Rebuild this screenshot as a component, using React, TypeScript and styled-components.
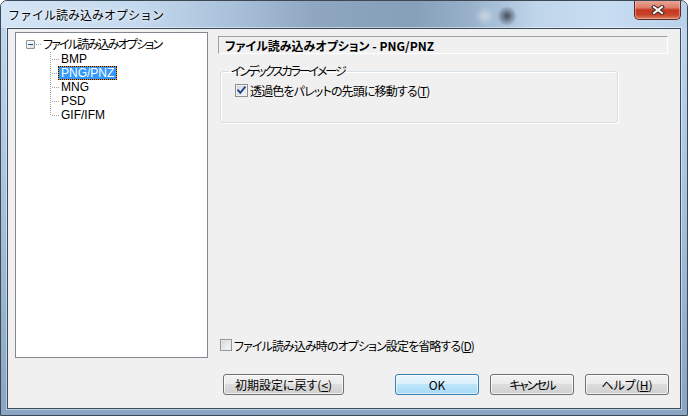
import React from "react";
import styled, { createGlobalStyle } from "styled-components";

const Global = createGlobalStyle`
  html, body { margin: 0; padding: 0; background: #fff; }
  body {
    width: 688px; height: 416px; overflow: hidden;
    font-family: "Noto Sans CJK JP", "Noto Sans", sans-serif;
    font-size: 12px; color: #000;
  }
`;

const UI_FONT = `"Noto Sans CJK JP", "Noto Sans", sans-serif`;
const LATIN_FONT = `"Liberation Sans", Arial, sans-serif`;

const Window = styled.div`
  width: 688px;
  height: 416px;
  box-sizing: border-box;
  display: flex;
  flex-direction: column;
  border: 1px solid #3d4855;
  border-radius: 7px 7px 0 0;
  overflow: hidden;
  background: linear-gradient(180deg, #c3d8ed 0%, #aac4df 45%, #88a4c2 100%);
`;

const TitleBar = styled.div`
  height: 27px;
  flex: none;
  display: flex;
  align-items: center;
  padding-left: 7px;
  background:
    radial-gradient(circle at 484px 15px, rgba(214, 222, 230, 0.75) 0, rgba(214, 222, 230, 0) 10px),
    radial-gradient(circle at 506px 15px, rgba(40, 48, 58, 0.8) 0, rgba(40, 48, 58, 0) 10px),
    linear-gradient(90deg, #d3e5f6 0%, #c4d9ee 20%, #a8c0d9 34%, #8ea6bf 46%, #86a0ba 60%,
      #97b0c9 68%, #bfd5ea 78%, #c9ddf2 88%, #b8d1ea 100%);
`;

const Title = styled.span`
  font-family: "Noto Sans CJK JP", sans-serif;
  font-size: 12px;
  line-height: 14px;
  color: #000;
  text-shadow: 0 0 6px rgba(255, 255, 255, 0.9), 0 0 3px rgba(255, 255, 255, 0.8);
`;

const CloseButton = styled.div`
  margin-left: auto;
  margin-right: 6px;
  align-self: flex-start;
  margin-top: -1px;
  width: 47px;
  height: 20px;
  box-sizing: border-box;
  border: 1px solid #5b2a22;
  border-top: none;
  border-radius: 0 0 5px 5px;
  display: flex;
  align-items: center;
  justify-content: center;
  background: linear-gradient(180deg, #e9aa9c 0%, #dc7f6a 40%, #c53a20 52%, #c6432a 78%, #df8464 100%);
  box-shadow: inset 0 0 0 1px rgba(255, 210, 200, 0.45);
`;

const Frame = styled.div`
  flex: 1;
  display: flex;
  padding: 0 6px 6px 6px;
`;

const Client = styled.div`
  flex: 1;
  display: flex;
  flex-direction: column;
  border: 1px solid #3b4a5a;
  background: #f0f0f0;
  box-shadow: 0 0 0 1px rgba(255, 255, 255, 0.45);
`;

const Main = styled.div`
  display: flex;
  gap: 10px;
  padding: 3px 12px 0 7px;
`;

const TreeBox = styled.div`
  width: 193px;
  height: 326px;
  box-sizing: border-box;
  border: 1px solid #828790;
  background: #fff;
  padding-top: 3px;
  font-family: ${UI_FONT};
  font-size: 12px;
`;

const RootRow = styled.div`
  height: 16px;
  display: flex;
  align-items: center;
  padding-left: 10px;
`;

const Expander = styled.div`
  width: 9px;
  height: 9px;
  box-sizing: border-box;
  border: 1px solid #919191;
  border-radius: 1px;
  background: linear-gradient(135deg, #ffffff 0%, #f2f2f2 50%, #d8d8d8 100%);
  display: flex;
  align-items: center;
  justify-content: center;
  &::after {
    content: "";
    width: 5px;
    height: 1px;
    background: #1f4d98;
  }
`;

const RootDots = styled.div`
  width: 5px;
  margin-left: 1px;
  margin-right: 1px;
  height: 1px;
  background: repeating-linear-gradient(90deg, #a0a0a0 0 1px, transparent 1px 2px);
`;

const TreeLabel = styled.span<{ $selected?: boolean; $spacing?: number; $latin?: boolean }>`
  display: block;
  height: 12px;
  line-height: 12px;
  padding: 0 2px;
  margin-left: -2px;
  font-family: ${(p) => (p.$latin ? LATIN_FONT : UI_FONT)};
  font-size: 12px;
  font-feature-settings: "palt";
  letter-spacing: ${(p) => p.$spacing ?? 0}px;
  white-space: nowrap;
  color: ${(p) => (p.$selected ? "#fff" : "#000")};
  background: ${(p) => (p.$selected ? "#3399ff" : "transparent")};
  border: 1px solid ${(p) => (p.$selected ? "#e8901c" : "transparent")};
  outline: ${(p) => (p.$selected ? "1px dotted #111" : "none")};
  outline-offset: -1px;
`;

const ChildRow = styled.div`
  height: 14px;
  display: flex;
  align-items: center;
  padding-left: 34px;
`;

const Connector = styled.svg`
  flex: none;
  display: block;
  margin-right: 1px;
`;

const RightCol = styled.div`
  flex: 1;
  display: flex;
  flex-direction: column;
  padding-top: 4px;
`;

const Header = styled.div`
  height: 18px;
  box-sizing: border-box;
  border-top: 1px solid #a0a0a0;
  border-left: 1px solid #a0a0a0;
  border-right: 1px solid #fff;
  border-bottom: 1px solid #fff;
  padding-left: 6px;
  display: flex;
  align-items: center;
  font-family: ${UI_FONT};
  font-weight: bold;
  font-size: 12px;
  font-feature-settings: "palt";
  white-space: nowrap;
`;

const Group = styled.fieldset`
  margin: 10px 50px 0 2px;
  height: 59px;
  box-sizing: border-box;
  padding: 0 8px;
  border: 1px solid #d5dfe5;
  border-radius: 3px;
  box-shadow: inset 1px 1px 0 #fff, 1px 1px 0 #fff;
  min-width: 0;
`;

const Legend = styled.legend`
  padding: 0 2px;
  font-family: ${UI_FONT};
  font-size: 12px;
  line-height: 14px;
  font-feature-settings: "palt";
  letter-spacing: -2.1px;
`;

const CheckRow = styled.label<{ $indent: number }>`
  display: flex;
  align-items: center;
  gap: 2px;
  height: 14px;
  margin-left: ${(p) => p.$indent}px;
  font-family: ${UI_FONT};
  font-size: 12px;
  white-space: nowrap;
`;

const CheckText = styled.span<{ $spacing: number }>`
  font-feature-settings: "palt";
  letter-spacing: ${(p) => p.$spacing}px;
`;

const GroupCheck = styled(CheckRow)`
  margin-top: 5px;
`;

const BottomCheck = styled(CheckRow)`
  margin-top: auto;
  margin-bottom: 6px;
`;

const Footer = styled.div`
  display: flex;
  align-items: center;
  margin-top: 16px;
  padding: 0 11px 0 215px;
`;

const ButtonGroup = styled.div`
  margin-left: auto;
  display: flex;
  gap: 11px;
`;

const Button = styled.button<{ $width: number; $default?: boolean; $spacing?: number }>`
  width: ${(p) => p.$width}px;
  height: 21px;
  box-sizing: border-box;
  margin: 0;
  padding: 0;
  border-radius: 3px;
  font-family: ${UI_FONT};
  font-size: 12px;
  line-height: 14px;
  font-feature-settings: "palt";
  letter-spacing: ${(p) => p.$spacing ?? 0}px;
  color: #000;
  border: 1px solid ${(p) => (p.$default ? "#3c7fb1" : "#707070")};
  background: ${(p) =>
    p.$default
      ? "linear-gradient(180deg, #eaf6fd 0%, #d9f0fc 49%, #bee6fd 50%, #a7d9f5 100%)"
      : "linear-gradient(180deg, #f2f2f2 0%, #ebebeb 49%, #dddddd 50%, #cfcfcf 100%)"};
  box-shadow: inset 0 0 0 1px ${(p) => (p.$default ? "rgba(255,255,255,0.6)" : "rgba(255,255,255,0.7)")};
`;

function CheckBox({ checked, size = 13 }: { checked?: boolean; size?: number }) {
  const id = checked ? "cbg1" : "cbg0";
  return (
    <svg width={size} height={size} viewBox="0 0 13 13" style={{ flex: "none", display: "block" }}>
      <defs>
        <linearGradient id={id} x1="0" y1="0" x2="1" y2="1">
          <stop offset="0" stopColor="#d6d8db" />
          <stop offset="1" stopColor="#fbfbfb" />
        </linearGradient>
      </defs>
      <rect x="0.5" y="0.5" width="12" height="12" fill="#fff" stroke="#8e8f8f" />
      <rect x="2" y="2" width="9" height="9" fill={`url(#${id})`} stroke="#c4c6c9" strokeWidth="0.5" />
      {checked && (
        <path d="M3.2 6.3 L5.3 8.8 L9.8 3.4" fill="none" stroke="#1e3f91" strokeWidth="1.9" strokeLinecap="square" />
      )}
    </svg>
  );
}

function TreeConnector({ last }: { last?: boolean }) {
  const dots = [] as React.ReactElement[];
  const vEnd = last ? 7 : 14;
  for (let y = 0; y < vEnd; y += 2) dots.push(<rect key={`v${y}`} x="0" y={y} width="1" height="1" />);
  for (let x = 2; x < 9; x += 2) dots.push(<rect key={`h${x}`} x={x} y="7" width="1" height="1" />);
  return (
    <Connector width="9" height="14" viewBox="0 0 9 14" fill="#a0a0a0" shapeRendering="crispEdges">
      {dots}
    </Connector>
  );
}

const children = ["BMP", "PNG/PNZ", "MNG", "PSD", "GIF/IFM"];

export default function App() {
  return (
    <>
      <Global />
      <Window>
        <TitleBar>
          <Title>ファイル読み込みオプション</Title>
          <CloseButton>
            <svg width="14" height="10" viewBox="0 0 14 10">
              <path d="M3 2 L11 8 M11 2 L3 8" stroke="#3b2622" strokeWidth="4" strokeLinecap="square" />
              <path d="M3 2 L11 8 M11 2 L3 8" stroke="#fff" strokeWidth="2" strokeLinecap="square" />
            </svg>
          </CloseButton>
        </TitleBar>
        <Frame>
          <Client>
            <Main>
              <TreeBox>
                <RootRow>
                  <Expander />
                  <RootDots />
                  <TreeLabel $spacing={-1.8}>ファイル読み込みオプション</TreeLabel>
                </RootRow>
                {children.map((c, i) => (
                  <ChildRow key={c}>
                    <TreeConnector last={i === children.length - 1} />
                    <TreeLabel $latin $selected={c === "PNG/PNZ"}>
                      {c}
                    </TreeLabel>
                  </ChildRow>
                ))}
              </TreeBox>
              <RightCol>
                <Header>ファイル読み込みオプション - PNG/PNZ</Header>
                <Group>
                  <Legend>インデックスカラーイメージ</Legend>
                  <GroupCheck $indent={6}>
                    <CheckBox checked />
                    <CheckText $spacing={-0.85}>
                      透過色をパレットの先頭に移動する(<u>T</u>)
                    </CheckText>
                  </GroupCheck>
                </Group>
                <BottomCheck $indent={2}>
                  <CheckBox size={12} />
                  <CheckText $spacing={-0.9}>
                    ファイル読み込み時のオプション設定を省略する(<u>D</u>)
                  </CheckText>
                </BottomCheck>
              </RightCol>
            </Main>
            <Footer>
              <Button $width={121}>
                初期設定に戻す(<u>&lt;</u>)
              </Button>
              <ButtonGroup>
                <Button $width={84} $default>
                  OK
                </Button>
                <Button $width={84} $spacing={-1.8}>
                  キャンセル
                </Button>
                <Button $width={84}>
                  ヘルプ(<u>H</u>)
                </Button>
              </ButtonGroup>
            </Footer>
          </Client>
        </Frame>
      </Window>
    </>
  );
}
